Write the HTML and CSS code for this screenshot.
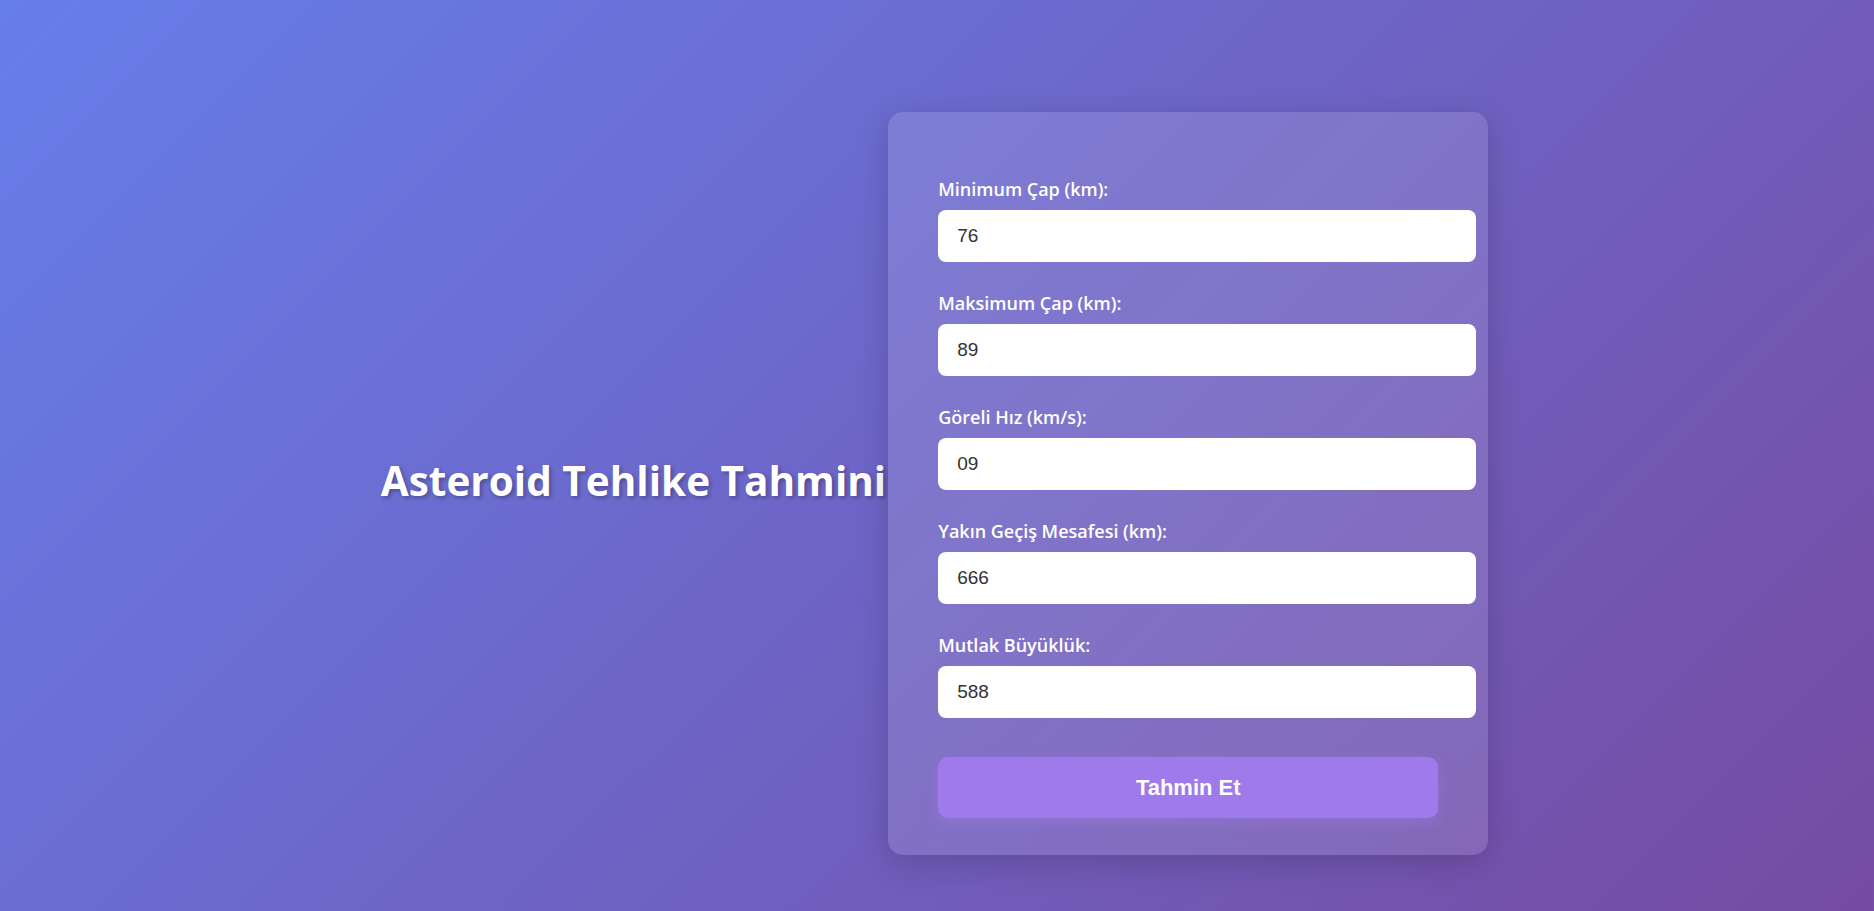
FILE: index.html
```html
<!DOCTYPE html>
<html lang="tr">
<head>
<meta charset="utf-8">
<title>Asteroid Tehlike Tahmini</title>
<link rel="stylesheet" href="styles.css">
</head>
<body>
<main class="page">
  <h1 class="title">Asteroid Tehlike Tahmini</h1>
  <form class="card">
    <div class="field">
      <label class="label" for="min">Minimum Çap (km):</label>
      <input class="input" id="min" type="text" value="76">
    </div>
    <div class="field">
      <label class="label" for="max">Maksimum Çap (km):</label>
      <input class="input" id="max" type="text" value="89">
    </div>
    <div class="field">
      <label class="label" for="hiz">Göreli Hız (km/s):</label>
      <input class="input" id="hiz" type="text" value="09">
    </div>
    <div class="field">
      <label class="label" for="mesafe">Yakın Geçiş Mesafesi (km):</label>
      <input class="input" id="mesafe" type="text" value="666">
    </div>
    <div class="field">
      <label class="label" for="buyukluk">Mutlak Büyüklük:</label>
      <input class="input" id="buyukluk" type="text" value="588">
    </div>
    <button class="button" type="button">Tahmin Et</button>
  </form>
</main>
</body>
</html>
```

FILE: styles.css
```css
* { box-sizing: border-box; }
html, body { margin: 0; padding: 0; }
body {
  min-height: 911px;
  background: linear-gradient(135deg, #667eea 0%, #764ba2 100%);
  font-family: "Open Sans", "Noto Sans", sans-serif;
  overflow: hidden;
}
.page {
  height: 911px;
  padding: 52px 5px 0 0;
  display: flex;
  justify-content: center;
  align-items: center;
}
.title {
  margin: 0 2px 0 0;
  color: #fff;
  font-family: "Open Sans", sans-serif;
  font-weight: 700;
  font-size: 40.5px;
  line-height: 1.2;
  text-shadow: 2px 2px 4px rgba(0, 0, 0, 0.3);
  white-space: nowrap;
}
.card {
  width: 600px;
  height: 743px;
  margin-top: 4px;
  padding: 66px 12px 0 50px;
  background: rgba(255, 255, 255, 0.12);
  border-radius: 15px;
  box-shadow: 0 8px 32px rgba(0, 0, 0, 0.18);
  display: flex;
  flex-direction: column;
}
.field {
  display: flex;
  flex-direction: column;
  margin-bottom: 30px;
}
.field:last-of-type { margin-bottom: 39px; }
.label {
  display: block;
  color: #fff;
  font-size: 18px;
  font-weight: 600;
  line-height: 22px;
  margin-bottom: 10px;
}
.input {
  width: 538px;
  height: 52px;
  padding: 0 19px;
  border: none;
  border-radius: 8px;
  background: #fff;
  color: #333;
  font-family: "Liberation Sans", Arial, sans-serif;
  font-size: 19px;
  outline: none;
}
.button {
  width: 500px;
  height: 61px;
  border: none;
  border-radius: 10px;
  background: #9f7aea;
  color: #fff;
  font-family: "Liberation Sans", Arial, sans-serif;
  font-weight: 700;
  font-size: 22px;
  box-shadow: 0 4px 15px rgba(159, 122, 234, 0.45);
  cursor: pointer;
}
```
